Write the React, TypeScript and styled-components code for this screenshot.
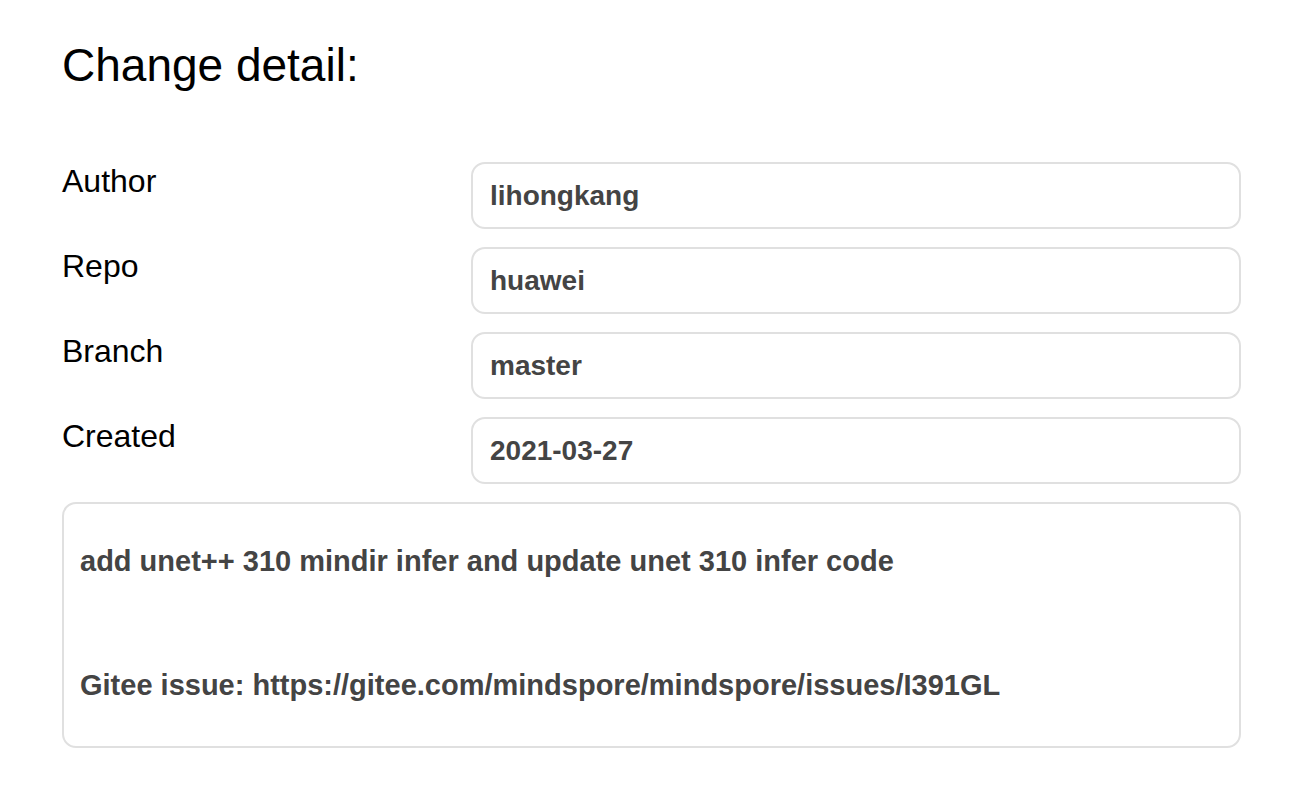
import React from "react";
import styled, { createGlobalStyle } from "styled-components";

const Global = createGlobalStyle`
  html, body { margin: 0; padding: 0; background: #fff; }
  body { font-family: "Liberation Sans", Arial, sans-serif; color: #000; }
`;

const Page = styled.div`
  padding: 39px 59px 40px 62px;
`;

const Title = styled.h1`
  margin: 0 0 70px;
  font-size: 46px;
  font-weight: 400;
  line-height: 53px;
  color: #000;
`;

const Rows = styled.div`
  display: grid;
  grid-template-columns: 409px 1fr;
  row-gap: 18px;
`;

const Label = styled.div`
  font-size: 32px;
  line-height: 38px;
  padding-top: 0;
  color: #000;
`;

const Field = styled.div`
  box-sizing: border-box;
  height: 67px;
  display: flex;
  align-items: center;
  padding: 0 17px;
  border: 2px solid #e0e0e0;
  border-radius: 14px;
  font-size: 28px;
  font-weight: 700;
  color: #444;
`;

const Message = styled.div`
  box-sizing: border-box;
  margin-top: 18px;
  padding: 36px 16px 40px;
  border: 2px solid #e0e0e0;
  border-radius: 14px;
  font-size: 29px;
  font-weight: 700;
  line-height: 42px;
  color: #444;
`;

const Para = styled.p<{ $gap?: number }>`
  margin: ${(p) => (p.$gap ? `${p.$gap}px 0 0` : "0")};
`;

const rows: [string, string][] = [
  ["Author", "lihongkang"],
  ["Repo", "huawei"],
  ["Branch", "master"],
  ["Created", "2021-03-27"],
];

export default function App() {
  return (
    <>
      <Global />
      <Page>
        <Title>Change detail:</Title>
        <Rows>
          {rows.map(([k, v]) => (
            <React.Fragment key={k}>
              <Label>{k}</Label>
              <Field>{v}</Field>
            </React.Fragment>
          ))}
        </Rows>
        <Message>
          <Para>add unet++ 310 mindir infer and update unet 310 infer code</Para>
          <Para $gap={82}>Gitee issue: https://gitee.com/mindspore/mindspore/issues/I391GL</Para>
        </Message>
      </Page>
    </>
  );
}
